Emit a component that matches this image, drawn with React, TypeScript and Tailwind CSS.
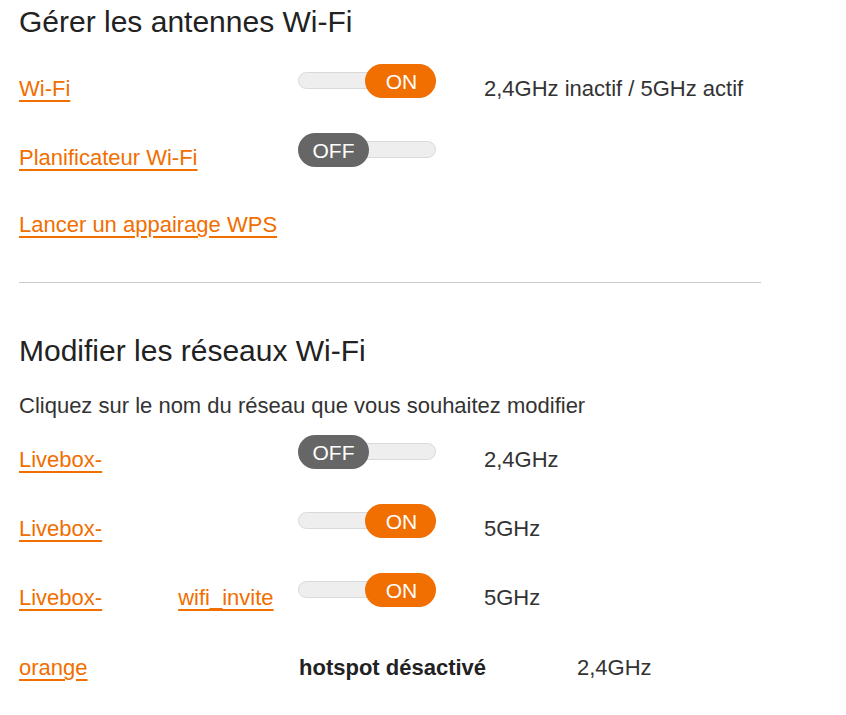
import clsx from 'clsx'

const ORANGE = 'text-[#f16e00]'

function Toggle({ on }: { on: boolean }) {
  return (
    <div className="relative h-[34px] w-[138px] shrink-0">
      <div className="absolute inset-x-0 top-[8px] h-[17px] rounded-full border border-[#d9d9d9] bg-[#eeeeee]" />
      <div
        className={clsx(
          'absolute top-0 flex h-[34px] w-[71px] items-center justify-center rounded-full text-[21px] leading-none text-white',
          on ? 'right-0 bg-[#f16e00] pl-[2px]' : 'left-0 bg-[#666666] text-[#eeeeee]',
        )}
      >
        {on ? 'ON' : 'OFF'}
      </div>
    </div>
  )
}

function Link({ children, className }: { children: React.ReactNode; className?: string }) {
  return (
    <a href="#" className={clsx(ORANGE, 'underline decoration-[2px] underline-offset-[4px]', className)}>
      {children}
    </a>
  )
}

interface RowProps {
  label: React.ReactNode
  on?: boolean
  status?: string
  textTop?: string
}

function Row({ label, on, status, textTop = 'mt-[12px]' }: RowProps) {
  return (
    <div className="flex h-[69px] items-start">
      <div className={clsx('w-[279px] shrink-0', textTop)}>{label}</div>
      {on !== undefined && <Toggle on={on} />}
      {status && <div className="ml-[48px] mt-[12px] text-[#333]">{status}</div>}
    </div>
  )
}

export default function App() {
  return (
    <div
      className="min-h-screen bg-white pl-[19px] pt-[4px] text-[22px] leading-[26px] text-[#333]"
      style={{ fontFamily: '"Liberation Sans", Arial, sans-serif' }}
    >
      <h1 className="text-[30px] leading-[36px] text-[#222]">Gérer les antennes Wi-Fi</h1>

      <div className="mt-[24px]">
        <Row label={<Link>Wi-Fi</Link>} on status="2,4GHz inactif / 5GHz actif" />
        <Row label={<Link>Planificateur Wi-Fi</Link>} on={false} />
        <Row label={<Link>Lancer un appairage WPS</Link>} textTop="mt-[10px]" />
      </div>

      <div className="mt-[11px] w-[742px] border-t border-[#cccccc]" />

      <h2 className="mt-[50px] text-[30px] leading-[36px] text-[#222]">Modifier les réseaux Wi-Fi</h2>
      <p className="mt-[24px]">Cliquez sur le nom du réseau que vous souhaitez modifier</p>

      <div className="mt-[16px]">
        <Row label={<Link>Livebox-</Link>} on={false} status="2,4GHz" />
        <Row label={<Link>Livebox-</Link>} on status="5GHz" />
        <Row
          label={
            <span className="whitespace-nowrap">
              <Link>Livebox-</Link>
              <span className="inline-block w-[76px]" />
              <Link>wifi_invite</Link>
            </span>
          }
          on
          status="5GHz"
        />
        <div className="flex h-[69px] items-start">
          <div className="mt-[13px] w-[280px] shrink-0">
            <Link>orange</Link>
          </div>
          <div className="mt-[13px] w-[278px] shrink-0 font-bold text-[#222]">hotspot désactivé</div>
          <div className="mt-[13px]">2,4GHz</div>
        </div>
      </div>
    </div>
  )
}
